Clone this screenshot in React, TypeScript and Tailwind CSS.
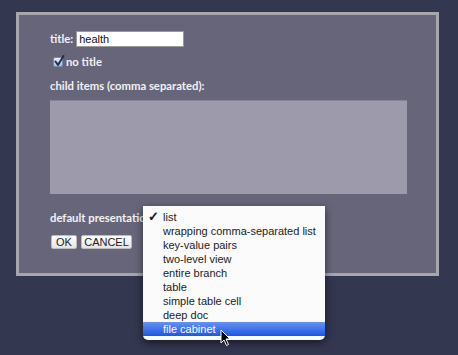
import React from "react";

const items = [
  "list",
  "wrapping comma-separated list",
  "key-value pairs",
  "two-level view",
  "entire branch",
  "table",
  "simple table cell",
  "deep doc",
  "file cabinet",
];

export default function App() {
  const label = { fontFamily: "Lato, 'Open Sans', sans-serif" };
  const menuFont = { fontFamily: "'Liberation Sans', Arial, sans-serif" };
  return (
    <div className="w-[458px] h-[355px] bg-[#333750] overflow-hidden pt-[12px] pl-[16px]">
      <div className="relative w-[423px] h-[264px] border-[3px] border-[#a7a7ab] bg-[#67657a] pl-[31px] pt-[16px]">
        <div className="flex flex-col text-[#f2f2f4] font-bold text-[11.3px]" style={label}>
          <div className="flex items-center h-[16px]">
            <span className="leading-[16px]">title:</span>
            <div
              className="ml-[3px] w-[108px] h-[16px] bg-white border border-[#9a9a9a] flex items-center pl-[2px] text-[#111] font-normal text-[11px]"
              style={menuFont}
            >
              health
            </div>
          </div>
          <div className="flex items-center h-[12px] mt-[9px] pl-[3px]">
            <div className="relative w-[10px] h-[10px] rounded-[2px] border border-[#7c8ca8] bg-gradient-to-b from-[#e6eefa] to-[#a9c1e6]">
              <svg className="absolute left-[0px] top-[-3px]" width="11" height="12" viewBox="0 0 11 12">
                <path d="M1.5 6.5 L4 10 L9.5 1" fill="none" stroke="#1d2e55" strokeWidth="2" strokeLinecap="round" strokeLinejoin="round" />
              </svg>
            </div>
            <span className="ml-[3px] leading-[12px]">no title</span>
          </div>
          <div className="mt-[11px] leading-[14px] h-[14px] whitespace-nowrap">child items (comma separated):</div>
          <div className="mt-[7px] w-[357px] h-[94px] bg-[#9c9aab] border-t border-[#85839a]" />
          <div className="mt-[17px] leading-[14px] h-[14px] whitespace-nowrap">default presentation</div>
          <div className="mt-[10px] ml-[1px] flex gap-[4px] font-normal" style={menuFont}>
            <div className="w-[26px] h-[14px] rounded-[2px] bg-gradient-to-b from-white to-[#e4e4e4] border border-[#bdbdbd] text-[#222] text-[11px] leading-[12px] flex items-center justify-center">
              OK
            </div>
            <div className="w-[51px] h-[14px] rounded-[2px] bg-gradient-to-b from-white to-[#e4e4e4] border border-[#bdbdbd] text-[#222] text-[11px] leading-[12px] flex items-center justify-center">
              CANCEL
            </div>
          </div>
        </div>

        <div
          className="absolute left-[124px] top-[191px] w-[182px] bg-[#fbfbfb] rounded-b-[5px] shadow-[0_3px_8px_rgba(0,0,0,0.55)] py-[4px] text-[11px] text-[#1a1a1a]"
          style={menuFont}
        >
          {items.map((it, i) => {
            const sel = i === items.length - 1;
            return (
              <div
                key={it}
                className={
                  sel
                    ? "relative h-[14px] leading-[14px] pl-[20px] whitespace-nowrap text-white bg-gradient-to-b from-[#6592f2] to-[#1f55e2]"
                    : "relative h-[14px] leading-[14px] pl-[20px] whitespace-nowrap"
                }
              >
                {i === 0 && <span className="absolute left-[5px] top-0 text-[13px] font-bold">✓</span>}
                {it}
              </div>
            );
          })}
          <svg className="absolute left-[77px] top-[123px]" width="12" height="18" viewBox="0 0 12 18">
            <path d="M1 1 L1 14 L4 11 L6.5 16.5 L8.5 15.5 L6 10 L10 10 Z" fill="#000" stroke="#fff" strokeWidth="1" strokeLinejoin="round" />
          </svg>
        </div>
      </div>
    </div>
  );
}
